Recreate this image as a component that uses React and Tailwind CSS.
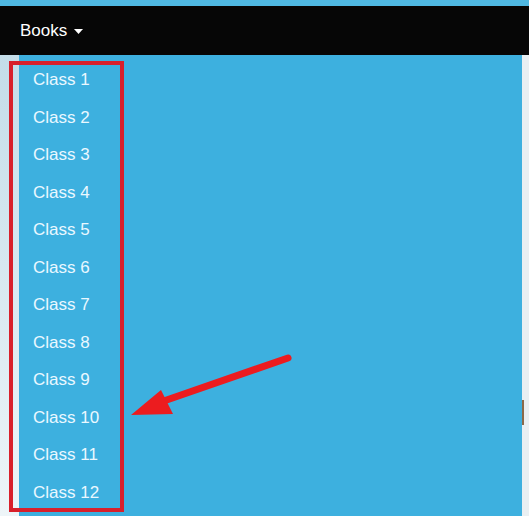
const classes = Array.from({ length: 12 }, (_, i) => `Class ${i + 1}`)

const Caret = () => (
  <svg width="9" height="5" viewBox="0 0 9 5" className="ml-[7px] mt-[2px]">
    <polygon points="0,0 9,0 4.5,5" fill="#ffffff" />
  </svg>
)

const App = () => {
  return (
    <div
      className="relative w-[529px] h-[516px] overflow-hidden flex flex-col bg-[#d9eaf2]"
      style={{ fontFamily: '"Liberation Sans", Arial, sans-serif' }}
    >
      <div className="h-[6px] bg-[#4fb8e2] shrink-0" />

      <nav className="h-[49px] shrink-0 bg-[#060606] flex items-center px-[20px]">
        <button className="flex items-center text-white text-[17px]">
          Books
          <Caret />
        </button>
      </nav>

      <div className="flex flex-1 min-h-0">
        <div className="w-[19px] bg-gradient-to-b from-[#c4dde9] to-[#eef5f8]" />
        <ul className="flex-1 bg-[#3db0df] pt-[6px] pl-[14px]">
          {classes.map((c) => (
            <li
              key={c}
              className="h-[37.5px] flex items-center text-[17px] text-[#eaf8ff]"
            >
              {c}
            </li>
          ))}
        </ul>
        <div className="w-[7px] bg-[#e9eff2] flex flex-col">
          <div className="h-[345px]" />
          <div className="h-[25px] w-[2px] bg-[#8a6a4a]" />
        </div>
      </div>

      {/* highlight box round the dropdown */}
      <div className="absolute left-[9px] top-[61px] w-[115px] h-[451px] border-[4px] border-[#d8202b]" />

      {/* pointer arrow */}
      <svg className="absolute left-0 top-0" width="529" height="516">
        <line
          x1="288"
          y1="358"
          x2="158"
          y2="403"
          stroke="#ec1c1f"
          strokeWidth="7"
          strokeLinecap="round"
        />
        <polygon points="131,415 161,390 173,414" fill="#ec1c1f" />
      </svg>
    </div>
  )
}

export default App
